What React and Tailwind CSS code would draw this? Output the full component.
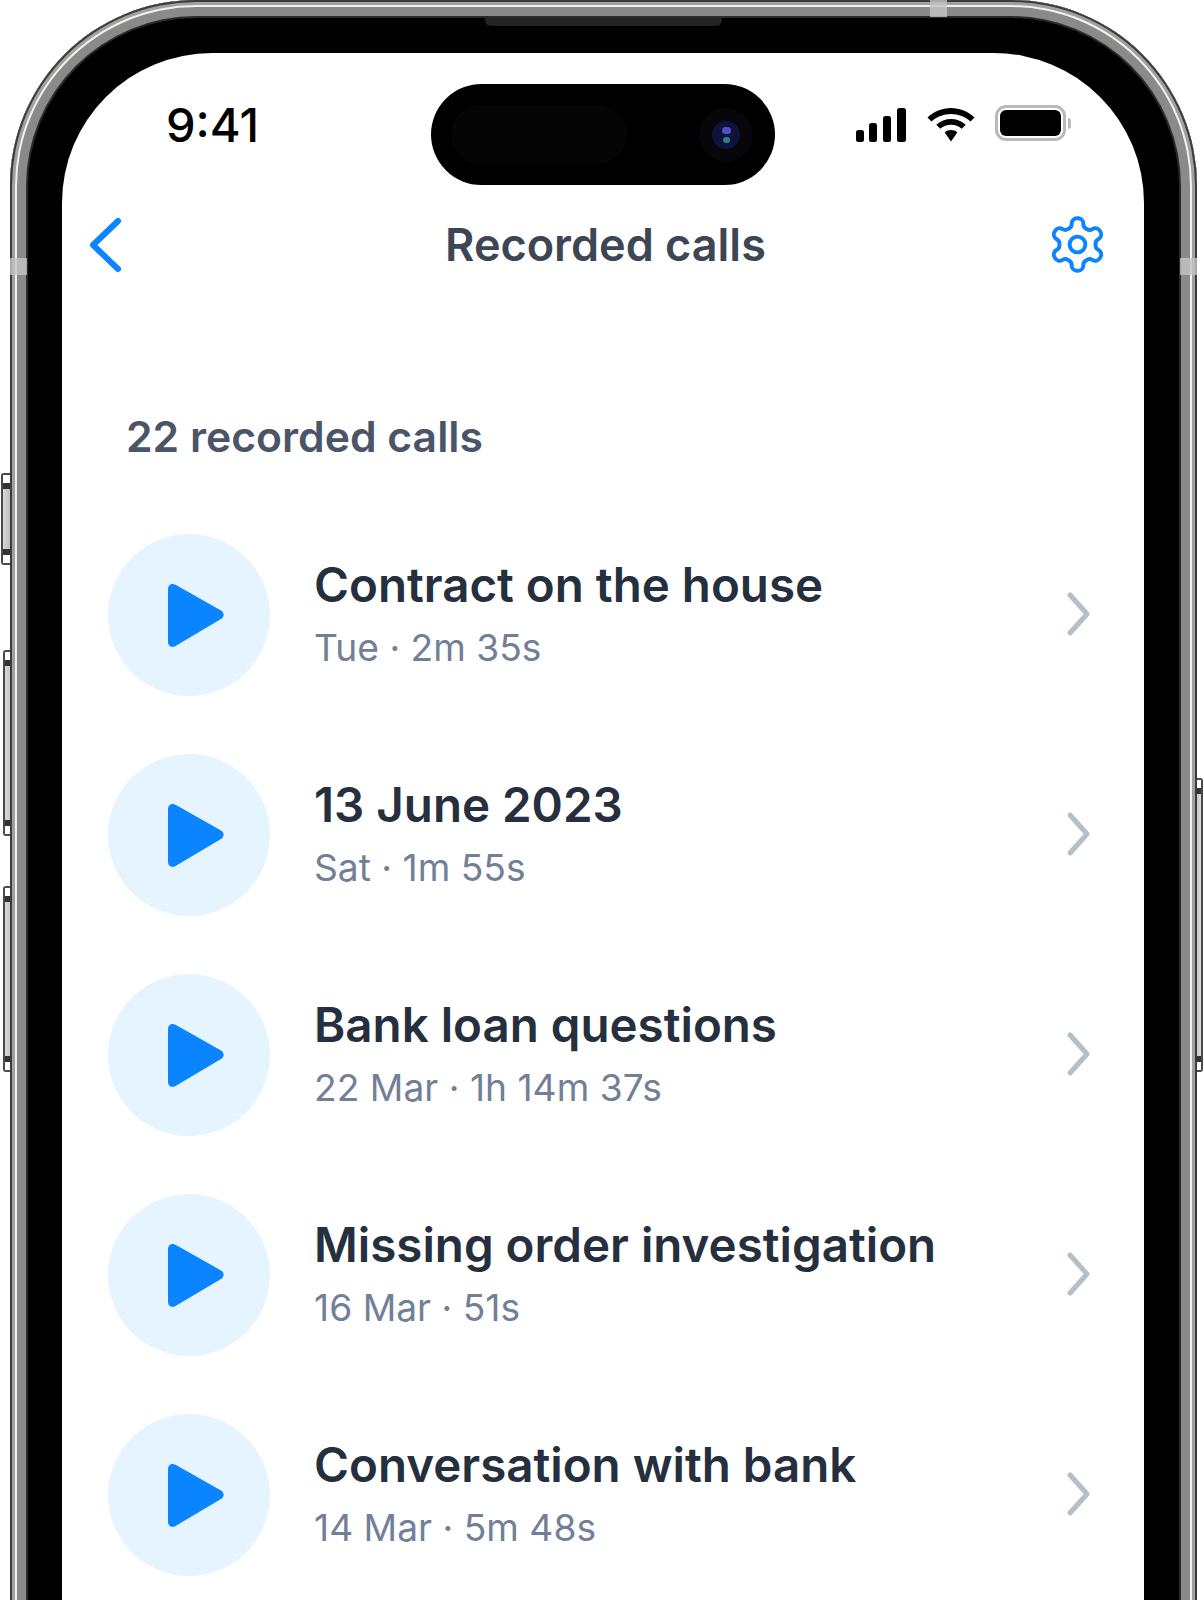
import React from 'react';

const CALLS = [
  { title: 'Contract on the house', meta: 'Tue · 2m 35s' },
  { title: '13 June 2023', meta: 'Sat · 1m 55s' },
  { title: 'Bank loan questions', meta: '22 Mar · 1h 14m 37s' },
  { title: 'Missing order investigation', meta: '16 Mar · 51s' },
  { title: 'Conversation with bank', meta: '14 Mar · 5m 48s' },
];

const SignalIcon = () => (
  <svg width="52" height="35" viewBox="0 0 52 35" fill="#000">
    <rect x="1" y="22" width="8" height="12" rx="2.5" />
    <rect x="14" y="15" width="8" height="19" rx="2.5" />
    <rect x="28" y="8" width="8" height="26" rx="2.5" />
    <rect x="42" y="0" width="9" height="34" rx="2.5" />
  </svg>
);

const WifiIcon = () => (
  <svg width="48" height="34" viewBox="0 0 48 34" fill="#000">
    <path d="M24 0C15 0 7 3.500 0.500 9.500L4.500 13.500C9.800 8.800 16.500 6 24 6C31.500 6 38.200 8.800 43.500 13.500L47.500 9.500C41 3.500 33 0 24 0Z" />
    <path d="M24 11C18.500 11 13.500 13 9.300 16.800L13.300 20.800C16.200 18.300 20 16.800 24 16.800C28 16.800 31.800 18.300 34.700 20.800L38.700 16.800C34.500 13 29.500 11 24 11Z" />
    <path d="M24 22C21.500 22 19.500 22.800 17.700 24.400L24 33.500L30.300 24.400C28.500 22.800 26.500 22 24 22Z" />
  </svg>
);

const Battery = () => (
  <div className="flex items-center gap-[2px] mb-[4px]">
    <div className="w-[71px] h-[36px] rounded-[11px] border-[3px] border-[#b9b9b9] p-[2px]">
      <div className="w-full h-full rounded-[6px] bg-black" />
    </div>
    <div className="w-[3px] h-[11px] rounded-r-full bg-[#b9b9b9]" />
  </div>
);

const PlayIcon = () => (
  <svg width="58" height="65" viewBox="0 0 58 65" fill="#0a84ff">
    <path d="M1 6.500C1 2 4.500 -0.300 8.500 1.800L54 27.500C57.500 29.500 57.500 34 54 36L8.500 63C4.500 65.200 1 63 1 58.500Z" />
  </svg>
);

const BackChevron = () => (
  <svg width="36" height="56" viewBox="0 0 36 56" fill="none" stroke="#0a84ff" strokeWidth="6" strokeLinecap="round" strokeLinejoin="round">
    <path d="M30 4L5 28L30 52" />
  </svg>
);

const GearIcon = () => (
  <svg width="63" height="63" viewBox="0 0 24 24" fill="none" stroke="#0a84ff" strokeWidth="1.5" strokeLinecap="round" strokeLinejoin="round">
    <path d="M12.220 2h-.440a2 2 0 0 0-2 2v.180a2 2 0 0 1-1 1.730l-.430.250a2 2 0 0 1-2 0l-.150-.080a2 2 0 0 0-2.730.730l-.220.380a2 2 0 0 0 .730 2.730l.150.100a2 2 0 0 1 1 1.720v.510a2 2 0 0 1-1 1.740l-.150.090a2 2 0 0 0-.730 2.730l.220.380a2 2 0 0 0 2.730.730l.150-.080a2 2 0 0 1 2 0l.430.250a2 2 0 0 1 1 1.730V20a2 2 0 0 0 2 2h.440a2 2 0 0 0 2-2v-.180a2 2 0 0 1 1-1.730l.430-.250a2 2 0 0 1 2 0l.150.080a2 2 0 0 0 2.730-.730l.220-.390a2 2 0 0 0-.730-2.730l-.150-.080a2 2 0 0 1-1-1.740v-.500a2 2 0 0 1 1-1.740l.150-.090a2 2 0 0 0 .730-2.730l-.220-.380a2 2 0 0 0-2.730-.730l-.150.080a2 2 0 0 1-2 0l-.430-.250a2 2 0 0 1-1-1.730V4a2 2 0 0 0-2-2z" />
    <circle cx="12" cy="12" r="3" />
  </svg>
);

const RowChevron = () => (
  <svg width="26" height="46" viewBox="0 0 26 46" fill="none" stroke="#b3bfcb" strokeWidth="5" strokeLinecap="round" strokeLinejoin="round">
    <path d="M5 4L22 23L5 42" />
  </svg>
);

const CallRow = ({ title, meta }) => (
  <div className="flex items-center h-[162px] mb-[58px]">
    <div className="w-[162px] h-[162px] rounded-full bg-[#e5f4ff] flex items-center justify-center shrink-0">
      <div className="ml-[13px] flex">
        <PlayIcon />
      </div>
    </div>
    <div className="ml-[44px] mb-[3px] flex-1">
      <div className="text-[47.5px] leading-[56px] font-semibold text-[#252f3d]">{title}</div>
      <div className="mt-[13px] text-[37.2px] leading-[44px] text-[#718096]">{meta}</div>
    </div>
    <div className="mr-[53px] mb-[2px] flex">
      <RowChevron />
    </div>
  </div>
);

// white cap, dark notch, then the brushed middle of the button
const ButtonMarks = () => (
  <>
    <div className="absolute inset-x-0 top-0 h-[8px] bg-white" />
    <div className="absolute inset-x-0 top-[8px] h-[6px] bg-[#333]" />
    <div className="absolute inset-x-0 bottom-[8px] h-[6px] bg-[#333]" />
    <div className="absolute inset-x-0 bottom-0 h-[8px] bg-white" />
  </>
);

const SideButton = ({ className }) => (
  <div className={`absolute w-[12px] rounded-l-[3px] border-y-[2px] border-l-[2px] border-[#4a4a4a] bg-[linear-gradient(90deg,#d8d8d8,#b4b4b4)] ${className}`}>
    <ButtonMarks />
  </div>
);

export default function App() {
  return (
    <div className="relative w-[1204px] h-[1600px] overflow-hidden bg-white font-['Inter',sans-serif]">
      <SideButton className="left-[1px] top-[473px] h-[92px]" />
      <SideButton className="left-[3px] top-[650px] h-[186px]" />
      <SideButton className="left-[3px] top-[886px] h-[186px]" />
      <div className="absolute left-[1193px] top-[778px] w-[10px] h-[294px] rounded-r-[3px] border-y-[2px] border-r-[2px] border-[#4a4a4a] bg-[linear-gradient(90deg,#b4b4b4,#dcdcdc)]">
        <ButtonMarks />
      </div>

      {/* phone body: metal edge built from stacked rings */}
      <div className="relative ml-[10px] w-[1187px] h-[1700px] rounded-t-[186px] bg-black pt-[53px] pl-[52px] pr-[53px] shadow-[inset_0_0_0_2px_#3c3c3c,inset_0_0_0_5px_#a0a0a0,inset_0_0_0_7px_#f2f2ec,inset_0_0_0_16px_#8a8a8a,inset_0_0_0_18px_#2a2a2a]">
        <div className="absolute left-[475px] top-[18px] w-[237px] h-[8px] rounded-b-[6px] bg-[#232323]" />
        <div className="absolute left-[920px] top-0 w-[17px] h-[17px] bg-[#c4c4c4]/80" />
        <div className="absolute left-0 top-[258px] w-[17px] h-[17px] bg-[#c4c4c4]/80" />
        <div className="absolute right-0 top-[258px] w-[17px] h-[17px] bg-[#c4c4c4]/80" />

        <div className="relative h-full bg-white rounded-t-[150px]">
          {/* status bar */}
          <div className="flex items-center h-[144px] pl-[104px] pr-[72px]">
            <div className="w-[100px] mb-[2px] text-[47px] font-medium text-black leading-none">9:41</div>
            <div className="ml-[165px] mt-[19px] w-[344px] h-[101px] rounded-full bg-black flex items-center justify-between pl-[20px] pr-[22px]">
              <div className="w-[176px] h-[59px] rounded-full bg-[#050505]" />
              <div className="w-[54px] h-[54px] rounded-full bg-[#07070b] flex items-center justify-center">
                <div className="w-[28px] h-[28px] rounded-full bg-[#10123c] flex flex-col items-center justify-center gap-[3px]">
                  <div className="w-[9px] h-[7px] rounded-full bg-[#5050c0]" />
                  <div className="w-[7px] h-[6px] rounded-full bg-[#2f7f86]" />
                </div>
              </div>
            </div>
            <div className="ml-[80px] flex items-center gap-[20px]">
              <SignalIcon />
              <WifiIcon />
              <Battery />
            </div>
          </div>

          {/* nav bar */}
          <div className="grid grid-cols-[1fr_auto_1fr] items-center h-[56px] mt-[14px] pl-[26px] pr-[35px]">
            <BackChevron />
            <div className="ml-[14px] text-[45px] font-semibold text-[#3c4654]">Recorded calls</div>
            <div className="justify-self-end">
              <GearIcon />
            </div>
          </div>

          <div className="mt-[145px] ml-[64px] text-[42.7px] leading-[50px] font-semibold text-[#4a5568]">22 recorded calls</div>

          <div className="mt-[72px] ml-[46px]">
            {CALLS.map((call) => (
              <CallRow key={call.title} title={call.title} meta={call.meta} />
            ))}
          </div>
        </div>
      </div>
    </div>
  );
}
